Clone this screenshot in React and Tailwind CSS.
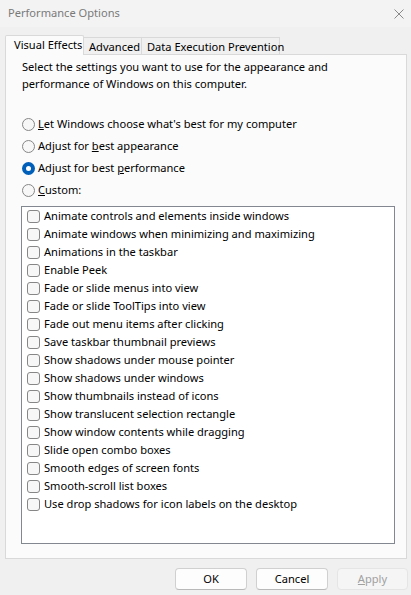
import React, { useState } from "react";

const effects = [
  "Animate controls and elements inside windows",
  "Animate windows when minimizing and maximizing",
  "Animations in the taskbar",
  "Enable Peek",
  "Fade or slide menus into view",
  "Fade or slide ToolTips into view",
  "Fade out menu items after clicking",
  "Save taskbar thumbnail previews",
  "Show shadows under mouse pointer",
  "Show shadows under windows",
  "Show thumbnails instead of icons",
  "Show translucent selection rectangle",
  "Show window contents while dragging",
  "Slide open combo boxes",
  "Smooth edges of screen fonts",
  "Smooth-scroll list boxes",
  "Use drop shadows for icon labels on the desktop",
];

const Radio = ({ checked, onClick, children, className }) => (
  <div className={`flex items-center cursor-default ${className}`} onClick={onClick}>
    {checked ? (
      <span className="w-[13px] h-[13px] shrink-0 rounded-full bg-[#005fb8] flex items-center justify-center">
        <span className="w-[5px] h-[5px] rounded-full bg-white"></span>
      </span>
    ) : (
      <span className="w-[13px] h-[13px] shrink-0 rounded-full border border-[#868686] bg-[#f7f7f7]"></span>
    )}
    <span className="ml-[3px]">{children}</span>
  </div>
);

const Checkbox = ({ label }) => (
  <div className="h-[18px] flex items-center pl-[5px]">
    <span className="w-[13px] h-[13px] shrink-0 rounded-[3px] border border-[#878787] bg-[#f7f7f7]"></span>
    <span className="ml-[4px]">{label}</span>
  </div>
);

const App = () => {
  const [mode, setMode] = useState("perf");

  return (
    <div className="w-[411px] h-[595px] bg-[#f0f0f0] text-[11.1px] text-black font-['Noto_Sans',sans-serif] flex flex-col overflow-hidden whitespace-nowrap">
      <div className="h-[27px] bg-[#f3f3f3] flex items-center justify-between pl-[8px] pr-[7px]">
        <span className="text-[#7a7a7a]">Performance Options</span>
        <svg width="10" height="10" viewBox="0 0 10 10">
          <path d="M0.5 0.5 L9.5 9.5 M9.5 0.5 L0.5 9.5" stroke="#8a8a8a" strokeWidth="1" />
        </svg>
      </div>

      <div className="pl-[5px] pr-[4px]">
        <div className="flex items-end mt-[8px] h-[19px]">
          <div className="relative z-10 h-[20px] -mb-px w-[79px] pl-[8px] leading-[18px] bg-[#fbfbfb] border border-b-0 border-[#d9d9d9] rounded-t-[2px]">
            Visual Effects
          </div>
          <div className="h-[17px] w-[58px] pl-[5px] leading-[17px] bg-[#f0f0f0] border border-l-0 border-b-0 border-[#d9d9d9]">
            Advanced
          </div>
          <div className="h-[17px] w-[138px] pl-[5px] leading-[17px] bg-[#f0f0f0] border border-l-0 border-b-0 border-[#d9d9d9]">
            Data Execution Prevention
          </div>
        </div>

        <div className="h-[505px] bg-[#fbfbfb] border border-[#d9d9d9] pl-[16px] pr-[12px]">
          <p className="mt-[3px] leading-[17px]">
            Select the settings you want to use for the appearance and
            <br />
            performance of Windows on this computer.
          </p>

          <div className="mt-[21px]">
            <Radio className="h-[22px]" checked={mode === "auto"} onClick={() => setMode("auto")}>
              <span className="underline">L</span>et Windows choose what's best for my computer
            </Radio>
            <Radio className="h-[22px]" checked={mode === "look"} onClick={() => setMode("look")}>
              Adjust for <span className="underline">b</span>est appearance
            </Radio>
            <Radio className="h-[22px]" checked={mode === "perf"} onClick={() => setMode("perf")}>
              Adjust for best <span className="underline">p</span>erformance
            </Radio>
            <Radio className="h-[23px]" checked={mode === "custom"} onClick={() => setMode("custom")}>
              <span className="underline">C</span>ustom:
            </Radio>
          </div>

          <div className="mt-[4px] -ml-[1px] w-[374px] h-[338px] bg-white border border-[#828790]">
            {effects.map((e) => (
              <Checkbox key={e} label={e} />
            ))}
          </div>
        </div>
      </div>

      <div className="flex justify-end gap-[9px] pr-[3px] mt-[9px]">
        <button className="w-[72px] h-[22px] rounded-[4px] bg-[#fdfdfd] border border-[#d0d0d0] border-b-[#b9b9b9]">
          OK
        </button>
        <button className="w-[72px] h-[22px] rounded-[4px] bg-[#fdfdfd] border border-[#d0d0d0] border-b-[#b9b9b9]">
          Cancel
        </button>
        <button disabled className="w-[71px] h-[22px] rounded-[4px] bg-[#f5f5f5] border border-[#e5e5e5] text-[#a0a0a0]">
          <span className="underline">A</span>pply
        </button>
      </div>
    </div>
  );
};

export default App;
